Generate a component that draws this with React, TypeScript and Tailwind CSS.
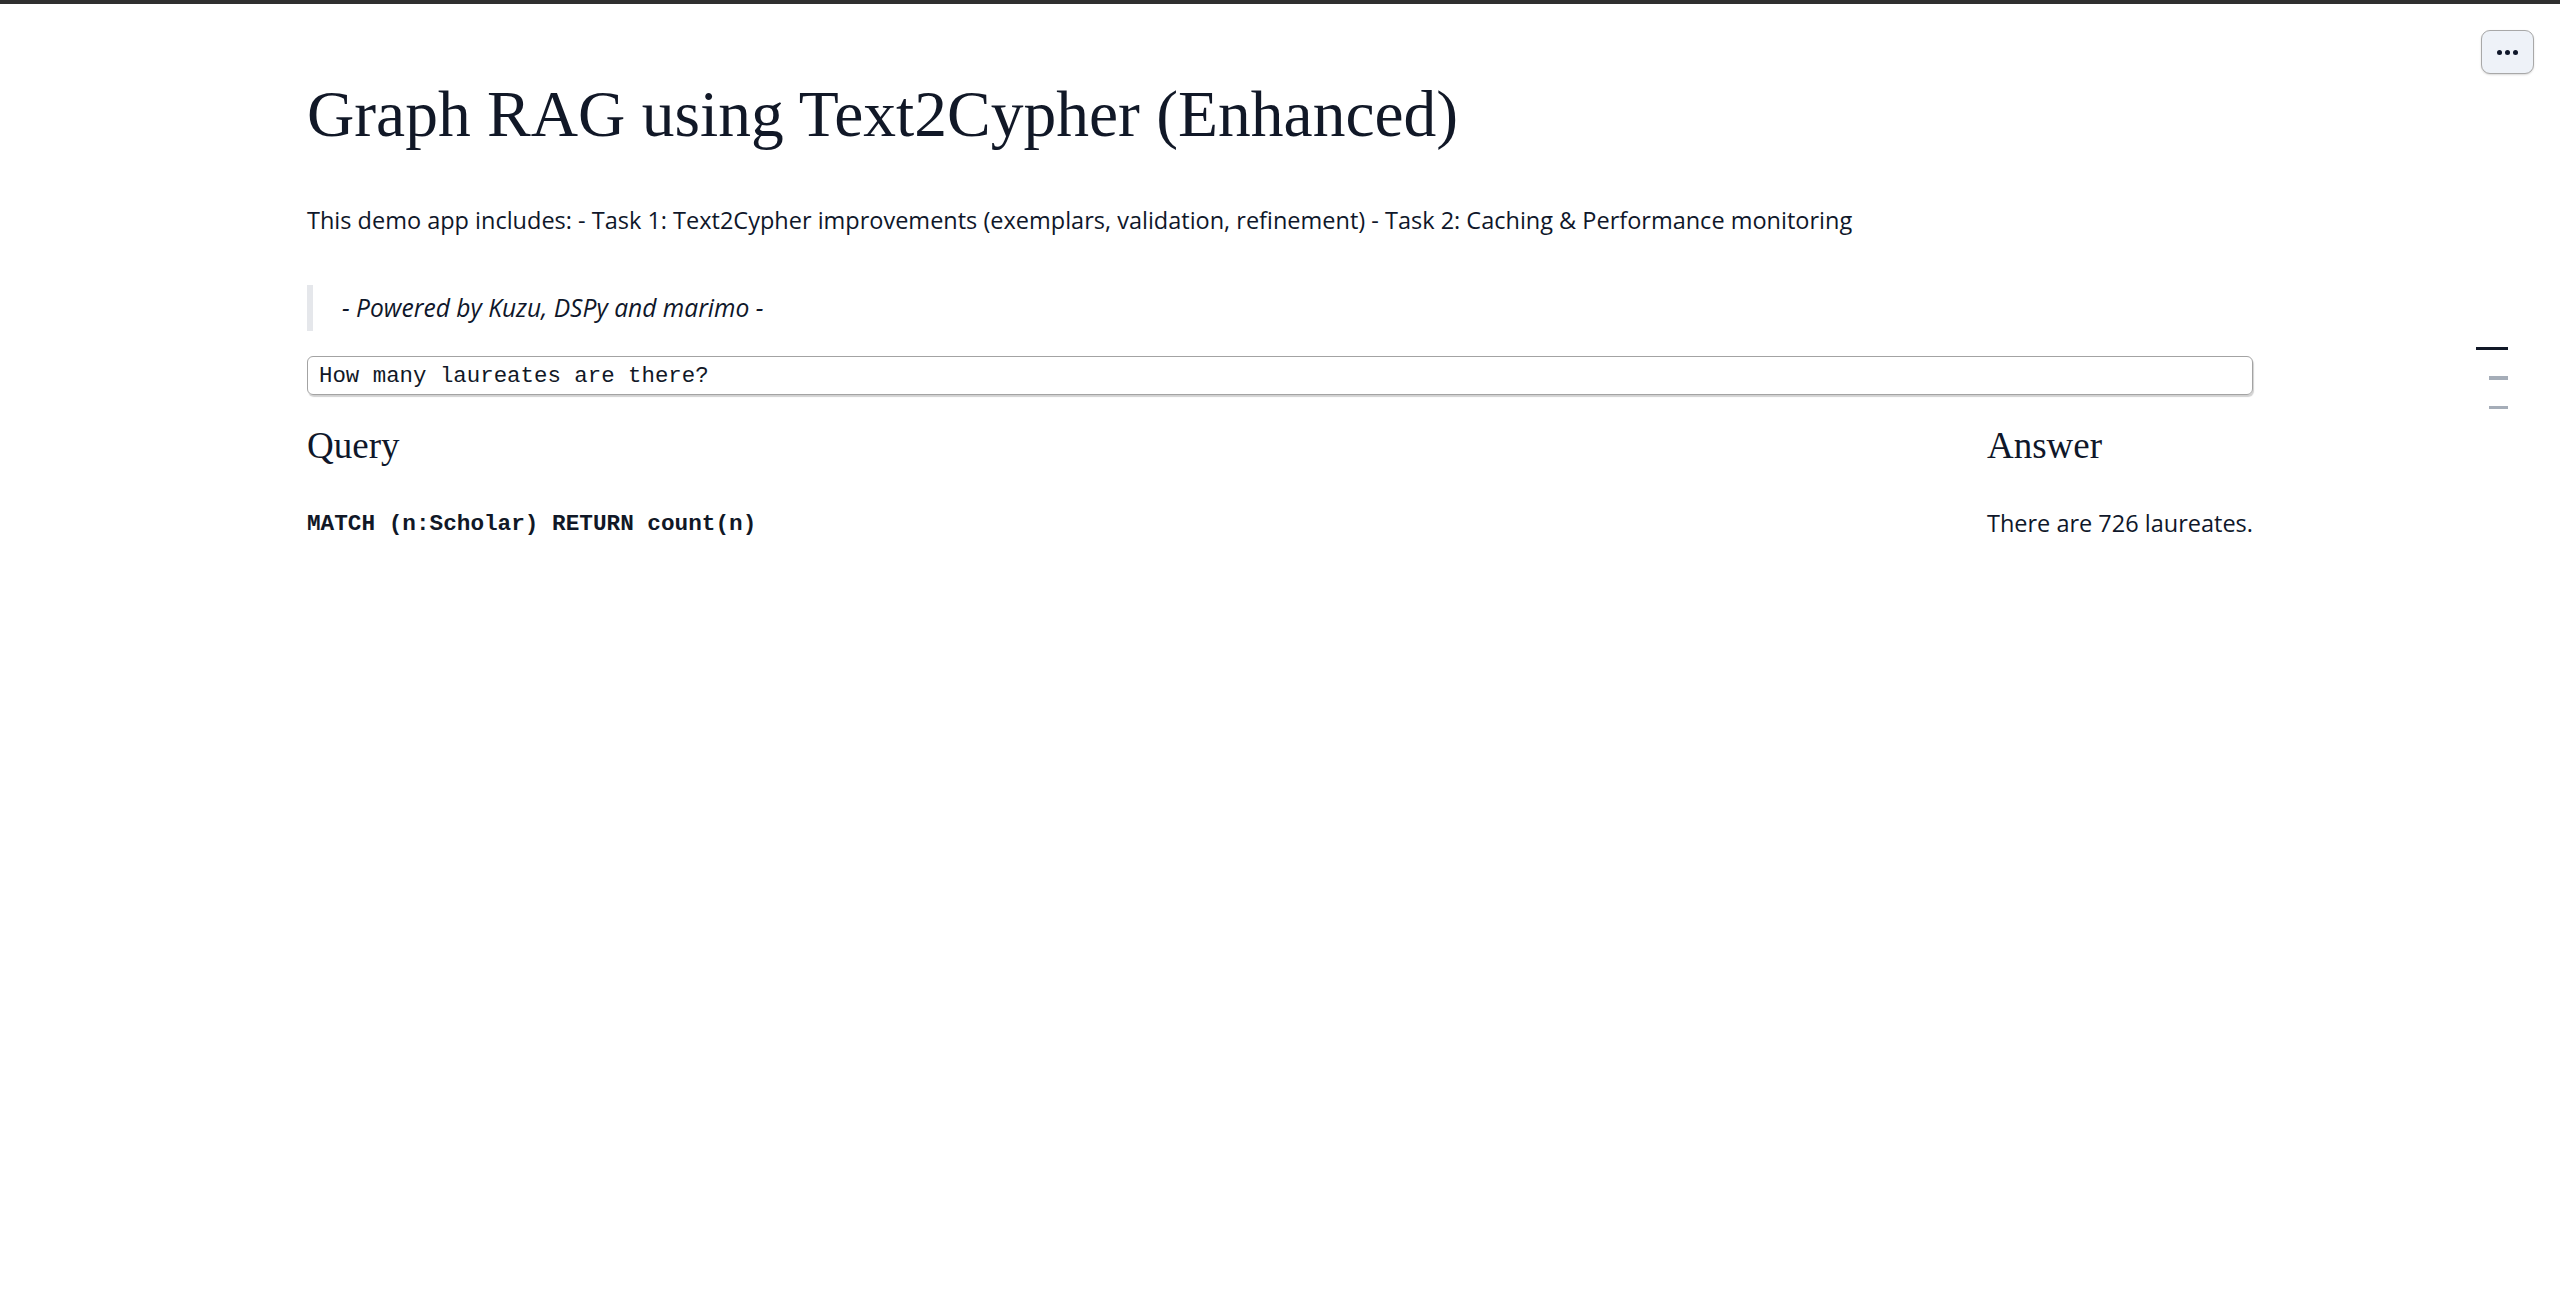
import React from "react";

export default function App() {
  return (
    <div className="relative min-h-[1298px] w-full bg-white text-[#0f172a]" style={{ fontFamily: "'Open Sans', 'Noto Sans', sans-serif" }}>
      <div className="h-[4px] w-full bg-[#2f2f2f]" />

      <button className="absolute top-[30px] right-[26px] flex h-[44px] w-[53px] items-center justify-center gap-[3px] rounded-[9px] border border-[#a8a8a8] bg-[#eef2f8] shadow-[0_1px_2px_rgba(0,0,0,0.15)]">
        <span className="h-[5px] w-[5px] rounded-full bg-[#0f172a]" />
        <span className="h-[5px] w-[5px] rounded-full bg-[#0f172a]" />
        <span className="h-[5px] w-[5px] rounded-full bg-[#0f172a]" />
      </button>

      <div className="absolute top-[347px] right-[52px] flex flex-col items-end">
        <div className="h-[3px] w-[32px] bg-[#111827]" />
        <div className="mt-[26px] h-[4px] w-[19px] bg-[#a5adb8]" />
        <div className="mt-[26px] h-[3px] w-[19px] bg-[#a5adb8]" />
      </div>

      <main className="mx-auto w-[1946px] pt-[72px]">
        <h1 className="text-[65.5px] leading-[77px] font-normal text-[#111827]" style={{ fontFamily: "'Liberation Serif', serif" }}>
          Graph RAG using Text2Cypher (Enhanced)
        </h1>
        <p className="mt-[51px] text-[23.5px] leading-[33px]">
          This demo app includes: - Task 1: Text2Cypher improvements (exemplars, validation, refinement) - Task 2: Caching &amp; Performance monitoring
        </p>
        <blockquote className="mt-[48px] border-l-[6px] border-[#e5e7eb] py-[6px] pl-[29px] text-[24.6px] leading-[34px] italic">
          - Powered by Kuzu, DSPy and marimo -
        </blockquote>
        <div className="mt-[25px] flex h-[39px] items-center rounded-[6px] border border-[#a3a3a3] pl-[11px] pt-[2px] shadow-[1px_2px_1px_rgba(0,0,0,0.18)]">
          <span className="text-[22.4px] text-[#111827]" style={{ fontFamily: "'Liberation Mono', monospace" }}>
            How many laureates are there?
          </span>
        </div>
        <div className="mt-[30px] flex justify-between">
          <div className="flex flex-col">
            <h2 className="text-[37px] leading-[41px] font-normal" style={{ fontFamily: "'Liberation Serif', serif" }}>Query</h2>
            <code className="mt-[42px] text-[22.7px] leading-[33px] font-bold text-[#111827]" style={{ fontFamily: "'Liberation Mono', monospace" }}>
              MATCH (n:Scholar) RETURN count(n)
            </code>
          </div>
          <div className="flex flex-col">
            <h2 className="text-[37px] leading-[41px] font-normal" style={{ fontFamily: "'Liberation Serif', serif" }}>Answer</h2>
            <p className="mt-[41px] text-[23.5px] leading-[33px]">There are 726 laureates.</p>
          </div>
        </div>
      </main>
    </div>
  );
}
